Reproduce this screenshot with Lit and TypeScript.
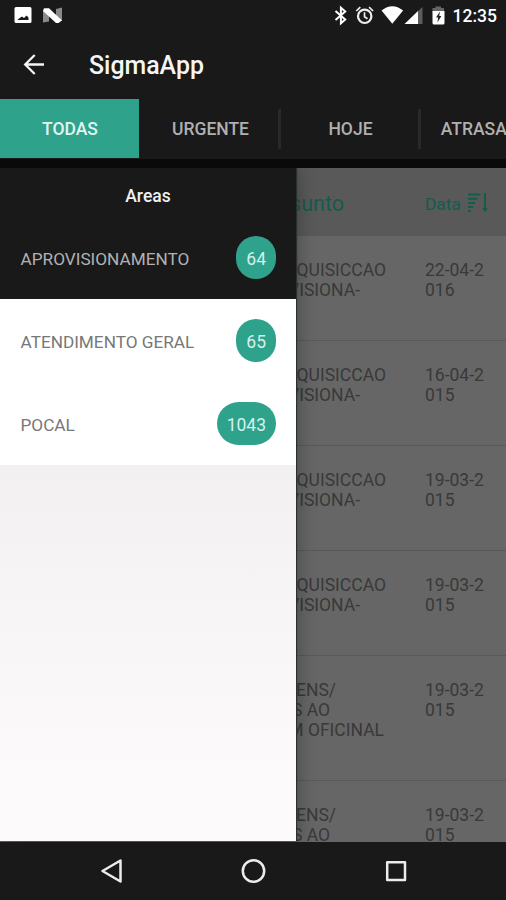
import { LitElement, html, css } from "lit";
import { customElement, property } from "lit/decorators.js";
import { classMap } from "lit/directives/class-map.js";

interface Line { text: string; end: number }
interface Row { lines: Line[]; date: string[] }

// "end" is the distance from the column's left side to the right edge of the line
const purchase: Line[] = [{ text: "AQUISICCAO", end: 100 }, { text: "VISIONA-", end: 74 }];
const workshop: Line[] = [{ text: "ENS/", end: 50 }, { text: "S AO", end: 44 }, { text: "M OFICINAL", end: 98 }];

const rows: Row[] = [
  { lines: purchase, date: ["22-04-2", "016"] },
  { lines: purchase, date: ["16-04-2", "015"] },
  { lines: purchase, date: ["19-03-2", "015"] },
  { lines: purchase, date: ["19-03-2", "015"] },
  { lines: workshop, date: ["19-03-2", "015"] },
  { lines: workshop.slice(0, 2), date: ["19-03-2", "015"] },
];

@customElement("status-bar")
class StatusBar extends LitElement {
  static styles = css`
    :host { display: flex; height: 32px; justify-content: space-between; color: #fff; }
    svg { display: block; }
    .clock { font-size: 17.500px; font-weight: 500; line-height: 33px; margin-left: 8px; }
    .left { display: flex; padding-left: 14px; }
    .right { display: flex; padding-right: 9px; }
  `;
  render() {
    return html`
      <div class="left">
        <svg width="50" height="32" viewBox="14 0 50 32">
          <path fill="#fff" fill-rule="evenodd" d="M16 7h14q1.500 0 1.500 1.500v13q0 1.500-1.500 1.500h-14q-1.500 0-1.500-1.500v-13q0-1.500 1.500-1.500zM17.500 20h11v-2.500l-2-2-2.500 2.500-2-1.500-3 2z"/>
          <path fill="#8a8a8a" d="M43 10l6-1.500v13l-6 1zM56 9l6-1.500v13l-6 1.500z"/>
          <path fill="#fff" d="M44 8.300h5L62 20.500l-3.500 2.500h-2.500L43 11z"/>
        </svg>
      </div>
      <div class="right">
        <svg width="112" height="32" viewBox="333 0 112 32">
          <path fill="none" stroke="#fff" stroke-width="2" d="M335.500 11l9.700 8.500-4.300 3.800V7.700l4.300 3.800-9.700 8.500"/>
          <circle cx="364.700" cy="16.300" r="6.700" fill="none" stroke="#eee" stroke-width="2.200"/>
          <path fill="none" stroke="#eee" stroke-width="1.700" d="M364.500 12.300v4.500l3 2M356.300 11l4-3.800M373.100 11l-4-3.800"/>
          <path fill="#fff" d="M381.500 10.500q10.800-8.500 21.600 0L392.300 23.800z"/>
          <path fill="#fff" d="M404.500 24L418 11v13z"/>
          <path fill="#5c5c5c" d="M418 11l4.500-4v17H418z"/>
          <path fill="#666" d="M432.500 8h3V6.500h5.500V8h3v5h-11.500z"/>
          <path fill="#fff" d="M432.500 11h12v12q0 1.500-1.500 1.500h-9q-1.500 0-1.500-1.500z"/>
          <path fill="#222" d="M440 11.500l-4 6h2.200l-.8 5 4-6.500h-2.200z"/>
        </svg>
        <span class="clock">12:35</span>
      </div>`;
  }
}

@customElement("area-item")
class AreaItem extends LitElement {
  @property() label = "";
  @property() count = "";
  @property({ type: Boolean }) selected = false;
  static styles = css`
    .item { display: flex; align-items: center; justify-content: space-between; height: 83px; padding: 0 20px; background: #fff; color: #777; font-size: 17.500px; }
    .selected { color: #b2b2b2; background: #191919; }
    .label { font-size: 17.200px; padding: 3px 0 0 0.500px; }
    .badge { height: 43px; line-height: 46px; padding: 0 10px; border-radius: 22px; background: #2fa28c; color: #d5f1eb; }
  `;
  render() {
    return html`<div class=${classMap({ item: true, selected: this.selected })}>
      <span class="label">${this.label}</span><span class="badge">${this.count}</span>
    </div>`;
  }
}

@customElement("app-root")
class AppRoot extends LitElement {
  static styles = css`
    :host { display: flex; flex-direction: column; width: 506px; height: 900px; overflow: hidden; background: #191919; font-family: Roboto, "Liberation Sans", sans-serif; }
    * { box-sizing: border-box; }
    svg { display: block; flex: none; }
    .appbar { display: flex; align-items: center; height: 67px; padding-left: 22px; gap: 43px; color: #f5f5f5; font-size: 24.900px; font-weight: 500; flex: none; }
    .appbar svg { margin-bottom: 3px; }
    .tabs { display: flex; height: 60px; flex: none; overflow: hidden; }
    .tab { width: 140px; flex: none; display: flex; align-items: center; color: #b0b0b0; font-size: 17.500px; font-weight: 500; }
    .tab span { flex: 1; text-align: center; padding-left: 3px; }
    .tab::after { content: ""; width: 3px; height: 40px; margin-right: -1px; background: #292929; }
    .tab.active { height: 59px; padding-top: 1px; background: #2fa28c; color: #e2f5f0; width: 139px; margin-right: 1px; }
    .tab.active span { padding-left: 1px; }
    .tab.active::after { display: none; }
    .strip { height: 9px; background: #0a0a0a; flex: none; }
    .content { position: relative; height: 674px; overflow: hidden; background: #666; flex: none; }
    .head { display: flex; align-items: center; height: 68px; background: #595959; color: #145c4c; padding-left: 286px; padding-top: 3px; }
    .subject { width: 139px; }
    .head .line { width: 58px; }
    .head .subject { font-size: 21.500px; }
    .head .date { font-size: 17.300px; width: 42px; }
    .head svg { margin-bottom: 1px; }
    .row { display: flex; height: 105px; padding: 24px 0 0 286px; border-bottom: 1px solid #595959; color: #393939; font-size: 17.500px; line-height: 20px; }
    .tall { height: 125px; }
    .line { display: flex; justify-content: flex-end; white-space: nowrap; }
    .drawer { position: absolute; left: 0; top: 0; width: 296px; height: 673px; background: linear-gradient(#f2f0f1 44%, #fdfafb 90%); box-shadow: 1px 0 1px #2a3230, 5px 0 16px rgba(0,0,0,.22); }
    .title { height: 48px; line-height: 56px; text-align: center; color: #f0f0f0; font-size: 17.500px; font-weight: 500; }
    .pad { height: 131px; background: #191919; box-shadow: inset 0 -1px #000; }
    .nav { height: 58px; }
  `;
  render() {
    return html`
      <status-bar></status-bar>
      <div class="appbar">
        <svg width="24" height="24" viewBox="22 52 24 24"><path fill="none" stroke="#f5f5f5" stroke-width="2.300" d="M44 64.500H25.500M34.700 55l-9.500 9.500 9.500 9.500"/></svg>
        <span>SigmaApp</span>
      </div>
      <div class="tabs">
        ${["TODAS", "URGENTE", "HOJE", "ATRASADAS"].map((t, i) => html`<div class=${classMap({ tab: true, active: i === 0 })}><span>${t}</span></div>`)}
      </div>
      <div class="strip"></div>
      <div class="content">
        <div class="head">
          <div class="subject"><div class="line">sunto</div></div><span class="date">Data</span>
          <svg width="22" height="22" viewBox="467 192 22 22"><path fill="none" stroke="#145c4c" stroke-width="2" d="M468 194.500h12.500M468 198.700h9.500M468 202.900h7M468 207h5M468 211h3M485 193v17M483 208l2 2.500 2-2.500"/></svg>
        </div>
        ${rows.map((r) => html`<div class=${classMap({ row: true, tall: r.lines.length > 2 })}>
          <div class="subject">${r.lines.map((l) => html`<div class="line" style="width:${l.end}px">${l.text}</div>`)}</div>
          <div>${r.date.map((d) => html`<div>${d}</div>`)}</div>
        </div>`)}
        <div class="drawer">
          <div class="pad">
            <div class="title">Areas</div>
            <area-item label="APROVISIONAMENTO" count="64" selected></area-item>
          </div>
          <area-item label="ATENDIMENTO GERAL" count="65"></area-item>
          <area-item label="POCAL" count="1043"></area-item>
        </div>
      </div>
      <svg class="nav" width="506" height="58" viewBox="0 842 506 58">
        <g fill="none" stroke="#ececec" stroke-width="2.500" stroke-linejoin="round">
          <path d="M120.500 860.500v21L102.500 871z"/>
          <circle cx="253.500" cy="871" r="10.700"/>
          <rect x="387.200" y="862.200" width="17.800" height="17.800"/>
        </g>
      </svg>`;
  }
}
